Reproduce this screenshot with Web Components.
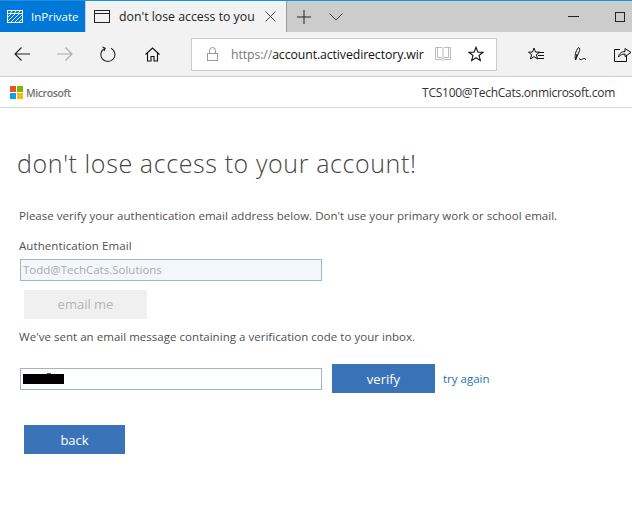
<!DOCTYPE html>
<html>
<head>
<meta charset="utf-8">
<title>don't lose access to your account!</title>
<style>
html, body { margin: 0; padding: 0; background: #fff; }
body { font-family: "Open Sans", "Noto Sans", sans-serif; width: 632px; height: 518px; overflow: hidden; }
</style>
</head>
<body>
<browser-chrome></browser-chrome>
<site-header user="TCS100@TechCats.onmicrosoft.com"></site-header>
<proofup-page></proofup-page>

<script>
const ICONS = {
  privateMark: '<svg width="16" height="13" viewBox="0 0 16 13" fill="none" stroke="#fff"><rect x=".5" y=".5" width="15" height="12"/><path d="M1 3.500h14M4 4 1 7M8 4l-7 7M12 4l-8 8M15 5l-7 7M15 9l-3 3M5 1 3.500 3M9 1 7.500 3M13 1l-1.500 2" stroke-width=".9"/></svg>',
  tab: '<svg width="17" height="14" viewBox="0 0 17 14" fill="none" stroke="#222"><rect x=".5" y=".5" width="15" height="12"/><path d="M1 3.500h14"/></svg>',
  close: '<svg width="11" height="11" viewBox="0 0 11 11" fill="none" stroke="#444"><path d="M.5.5l10 10M10.500.5l-10 10"/></svg>',
  plus: '<svg width="14" height="14" viewBox="0 0 14 14" fill="none" stroke="#222"><path d="M7 0v14M0 7h14"/></svg>',
  chevron: '<svg width="14" height="8" viewBox="0 0 14 8" fill="none" stroke="#444"><path d="M.5.5 7 7l6.500-6.500"/></svg>',
  minimize: '<svg width="11" height="1" viewBox="0 0 11 1"><path d="M0 0h11v1H0z" fill="#222"/></svg>',
  maximize: '<svg width="10" height="10" viewBox="0 0 10 10" fill="none" stroke="#222"><rect x=".5" y=".5" width="9" height="9"/></svg>',
  back: '<svg width="16" height="14" viewBox="0 0 16 14" fill="none" stroke="#222" stroke-width="1.1"><path d="M16 7H1M7.500.5 1 7l6.500 6.500"/></svg>',
  forward: '<svg width="16" height="14" viewBox="0 0 16 14" fill="none" stroke="#aaa" stroke-width="1.1"><path d="M0 7h15M8.500.5 15 7l-6.500 6.500"/></svg>',
  refresh: '<svg width="16" height="17" viewBox="0 0 16 17" fill="none" stroke="#222" stroke-width="1.1"><path d="M5 2.200A7 7 0 1 0 11 2.300"/><path d="M2.500 1 5.200 2.300 4 5"/></svg>',
  home: '<svg width="15" height="15" viewBox="0 0 15 15" fill="none" stroke="#111" stroke-width="1.1"><path d="M.5 7.500 7.500 1l7 6.500M2.500 6v8h3.500V9.500h3V14h3.500V6"/></svg>',
  lock: '<svg width="11" height="14" viewBox="0 0 11 14" fill="none" stroke="#999"><rect x=".5" y="6.500" width="10" height="7"/><path d="M2.500 6.500V3.500a3 3 0 0 1 6 0v3"/></svg>',
  book: '<svg width="16" height="16" viewBox="0 0 16 16" fill="none" stroke="#bbb"><path d="M.5 1.500h6.500l1 1 1-1h6.500v12H9l-1 1-1-1H.5zM8 2.500v11M2.500 1.500v10H7M13.500 1.500v10H9"/></svg>',
  star: '<svg width="16" height="16" viewBox="0 0 16 16" fill="none" stroke="#111" stroke-width="1.1"><path d="M8 1.200 9.900 6.100 15 6.300 11 9.500 12.400 14.600 8 11.700 3.600 14.600 5 9.500 1 6.300 6.100 6.100z"/></svg>',
  favorites: '<svg width="16" height="15" viewBox="0 0 16 15" fill="none" stroke="#111"><path d="M6 1 7.500 5 11.500 5.200 8.400 7.700 9.500 12 6 9.600 2.500 12 3.600 7.700.5 5.200 4.500 5zM10.500 5.500H16M10 8.500H16M9.500 11.500H16"/></svg>',
  pen: '<svg width="15" height="17" viewBox="0 0 15 17" fill="none" stroke="#111"><path d="M2.500 14C1.500 10 2.500 5 5.500 1.500c1.500.5 1.500 2.500.5 4.500L2.500 14zM2.500 14 4 8M6 12.500c1.500 1.500 2.500 1.500 3.500.5s2-.5 3.500.5"/></svg>',
  share: '<svg width="18" height="15" viewBox="0 0 18 15" fill="none" stroke="#111"><path d="M6 2.500H.5v12h12V9M4.500 10C5 6 8 4.500 11 4.500V1.500L17 5.500 11 9.500V7C8 7 6 8 4.500 10z"/></svg>'
};

class BrowserChrome extends HTMLElement {
  constructor() {
    super();
    this.attachShadow({mode: 'open'});
  }
  connectedCallback() {
    this.shadowRoot.innerHTML = `
    <style>
      :host { display: block; font-family: "Open Sans", "Noto Sans", sans-serif; }
      .tabs { height: 32px; background: #ccc; border-top: 1px solid #1c8fe0; box-sizing: border-box; display: flex; align-items: stretch; }
      .private { width: 85px; background: #0078d7; color: #fff; display: flex; align-items: center; gap: 8px; padding-left: 7px; box-sizing: border-box; font-size: 11.500px; }
      .tab { width: 201px; margin-left: 1px; background: #f2f2f2; display: flex; align-items: center; padding-left: 8px; box-sizing: border-box; font-size: 12.300px; color: #222; white-space: nowrap; border-right: 1px solid #999; }
      .tab .label { margin-left: 8px; width: 137px; }
      .tab .x { margin-left: 9px; display: flex; }
      .plus { margin-left: 10px; display: flex; align-items: center; }
      .chev { margin-left: 18px; display: flex; align-items: center; }
      .win { margin-left: auto; display: flex; align-items: center; gap: 36px; padding-right: 7px; }
      .toolbar { height: 44px; background: #f2f2f2; display: flex; align-items: center; border-bottom: 1px solid #ccc; box-sizing: content-box; }
      .nav { display: flex; align-items: center; width: 191px; padding-left: 14px; box-sizing: border-box; }
      .nav span { display: flex; }
      .nav span:nth-child(2) { margin-left: 27px; }
      .nav span:nth-child(3) { margin-left: 27px; }
      .nav span:nth-child(4) { margin-left: 29px; }
      .address { width: 306px; height: 33px; box-sizing: border-box; background: #fff; border: 1px solid #ccc; display: flex; align-items: center; font-size: 12.300px; padding-left: 15px; color: #111; }
      .address .url { margin-left: 13px; width: 193px; white-space: nowrap; letter-spacing: -.1px; }
      .address .url i { font-style: normal; color: #777; }
      .address .book { margin-left: 11px; display: flex; }
      .address .star { margin-left: 17px; display: flex; }
      .tools { display: flex; align-items: center; margin-left: 31px; }
      .tools span { display: flex; }
      .tools span:nth-child(2) { margin-left: 29px; }
      .tools span:nth-child(3) { margin-left: 26px; }
    </style>
    <div class="tabs">
      <div class="private">${ICONS.privateMark}<span>InPrivate</span></div>
      <div class="tab">${ICONS.tab}<span class="label">don't lose access to you</span><span class="x">${ICONS.close}</span></div>
      <div class="plus">${ICONS.plus}</div>
      <div class="chev">${ICONS.chevron}</div>
      <div class="win">${ICONS.minimize}${ICONS.maximize}</div>
    </div>
    <div class="toolbar">
      <div class="nav"><span>${ICONS.back}</span><span>${ICONS.forward}</span><span>${ICONS.refresh}</span><span>${ICONS.home}</span></div>
      <div class="address">${ICONS.lock}<span class="url"><i>https://</i>account.activedirectory.wir</span><span class="book">${ICONS.book}</span><span class="star">${ICONS.star}</span></div>
      <div class="tools"><span>${ICONS.favorites}</span><span>${ICONS.pen}</span><span>${ICONS.share}</span></div>
    </div>`;
  }
}

class SiteHeader extends HTMLElement {
  constructor() {
    super();
    this.attachShadow({mode: 'open'});
  }
  connectedCallback() {
    this.shadowRoot.innerHTML = `
    <style>
      :host { display: flex; height: 31px; box-sizing: border-box; align-items: center; justify-content: space-between; border-bottom: 1px solid #d9d9d9; font-family: "Open Sans", "Noto Sans", sans-serif; padding: 0 17px 0 10px; }
      .logo { display: flex; align-items: center; gap: 3px; color: #737373; font-size: 10.500px; font-weight: 600; letter-spacing: -.4px; padding-top: 1px; }
      .grid { display: grid; grid-template-columns: 6px 6px; grid-template-rows: 6px 6px; gap: 1px; }
      .user { font-size: 12px; color: #333; letter-spacing: -.26px; }
    </style>
    <div class="logo">
      <div class="grid">
        <div style="background:#f25022"></div><div style="background:#7fba00"></div>
        <div style="background:#00a4ef"></div><div style="background:#ffb900"></div>
      </div>
      <span>Microsoft</span>
    </div>
    <div class="user">${this.getAttribute('user')}</div>`;
  }
}

class ActionButton extends HTMLElement {
  constructor() {
    super();
    this.attachShadow({mode: 'open'});
  }
  connectedCallback() {
    this.shadowRoot.innerHTML = `
    <style>
      :host { display: flex; align-items: center; justify-content: center; height: 29px; background: #3b73b9; color: #fff; font-size: 13px; box-sizing: border-box; }
      :host([disabled]) { background: #f0f0f0; color: #b5b5b5; padding-bottom: 1px; }
    </style>
    <slot></slot>`;
  }
}

class TextBox extends HTMLElement {
  constructor() {
    super();
    this.attachShadow({mode: 'open'});
  }
  connectedCallback() {
    this.shadowRoot.innerHTML = `
    <style>
      :host { display: block; width: 302px; height: 22px; box-sizing: border-box; border: 1px solid #a0b4c8; background: #fff; font-size: 11.500px; line-height: 20px; padding-left: 2px; color: #aaa; position: relative; }
      :host([disabled]) { background: #f3f7fb; }
    </style>
    <slot></slot>`;
  }
}

class ProofupPage extends HTMLElement {
  constructor() {
    super();
    this.attachShadow({mode: 'open'});
  }
  connectedCallback() {
    this.shadowRoot.innerHTML = `
    <style>
      :host { display: block; padding: 0 0 0 19px; font-family: "Open Sans", "Noto Sans", sans-serif; color: #505050; }
      h1 { margin: 38px 0 0 -2px; font-size: 25px; line-height: 34px; font-weight: 300; color: #444; letter-spacing: .61px; white-space: nowrap; }
      p { margin: 0; font-size: 11.500px; line-height: 16px; white-space: nowrap; letter-spacing: .03px; }
      .intro { margin-top: 28px; }
      .label { margin-top: 14px; letter-spacing: .08px; }
      text-box { margin: 5px 0 0 1px; }
      .email { width: 123px; margin: 9px 0 0 5px; }
      .sent { margin-top: 10px; }
      .row { display: flex; align-items: center; margin-top: 19px; }
      .row text-box { margin-top: 0; }
      .row action-button { width: 103px; margin-left: 10px; }
      a { margin-left: 8px; font-size: 11.500px; color: #2672b5; text-decoration: none; }
      .mask { position: absolute; left: 2px; top: 5px; width: 41px; height: 10px; background: #000; }
      .mask::before { content: ""; position: absolute; left: 24px; top: -1px; width: 4px; height: 1px; background: #555; }
      .back { width: 101px; margin: 32px 0 0 5px; }
    </style>
    <h1>don't lose access to your account!</h1>
    <p class="intro">Please verify your authentication email address below. Don't use your primary work or school email.</p>
    <p class="label">Authentication Email</p>
    <text-box disabled>Todd@TechCats.Solutions</text-box>
    <action-button class="email" disabled>email me</action-button>
    <p class="sent">We've sent an email message containing a verification code to your inbox.</p>
    <div class="row">
      <text-box class="code"><div class="mask"></div></text-box>
      <action-button>verify</action-button>
      <a href="#">try again</a>
    </div>
    <action-button class="back">back</action-button>`;
  }
}

customElements.define('browser-chrome', BrowserChrome);
customElements.define('site-header', SiteHeader);
customElements.define('action-button', ActionButton);
customElements.define('text-box', TextBox);
customElements.define('proofup-page', ProofupPage);
</script>
</body>
</html>
